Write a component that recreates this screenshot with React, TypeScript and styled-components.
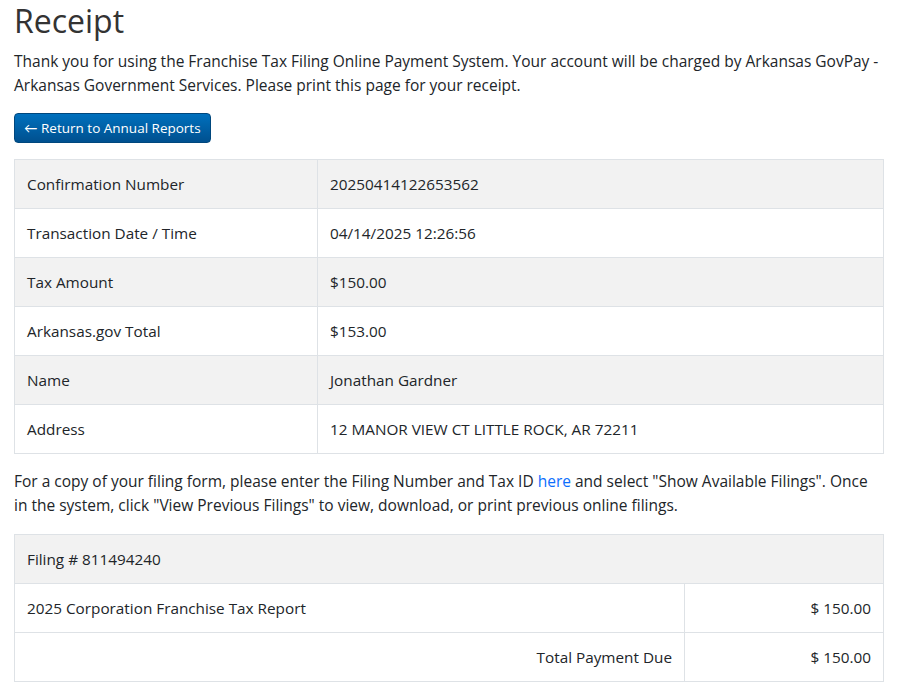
import styled, { createGlobalStyle } from "styled-components";

const GlobalStyle = createGlobalStyle`
  body {
    margin: 0;
    background: #fff;
    font-family: "Open Sans", Lato, sans-serif;
    color: #212529;
  }
`;

const Page = styled.div`
  padding: 0 22px 0 14px;
  width: 870px;
`;

const Title = styled.h1`
  margin: 0;
  padding-top: 2px;
  font-size: 32px;
  font-weight: 400;
  line-height: 38px;
  color: #333;
`;

const Text = styled.p<{ $top?: number }>`
  margin: ${(p) => p.$top ?? 9}px 0 0;
  font-size: 15.5px;
  line-height: 24px;
  color: #212529;
`;

const Link = styled.a`
  color: #0d6efd;
  text-decoration: none;
`;

const BackButton = styled.button`
  margin-top: 16px;
  height: 30px;
  padding: 0 9px;
  border: 1px solid #00477d;
  border-radius: 4px;
  background: linear-gradient(#0070bd, #00508f);
  color: #fff;
  font-family: inherit;
  font-size: 13.5px;
  cursor: pointer;
`;

const Table = styled.table<{ $top: number }>`
  width: 100%;
  table-layout: fixed;
  border-collapse: collapse;
  margin-top: ${(p) => p.$top}px;
  font-size: 15.3px;
`;

const Row = styled.tr<{ $shade?: boolean }>`
  background: ${(p) => (p.$shade ? "#f2f2f2" : "#fff")};
`;

const Cell = styled.td<{ $right?: boolean }>`
  height: 48px;
  padding: 0 12px;
  border: 1px solid #dee2e6;
  text-align: ${(p) => (p.$right ? "right" : "left")};
  color: #212529;
`;

const receipt = [
  ["Confirmation Number", "20250414122653562"],
  ["Transaction Date / Time", "04/14/2025 12:26:56"],
  ["Tax Amount", "$150.00"],
  ["Arkansas.gov Total", "$153.00"],
  ["Name", "Jonathan Gardner"],
  ["Address", "12 MANOR VIEW CT LITTLE ROCK, AR 72211"],
];

export default function App() {
  return (
    <Page>
      <GlobalStyle />
      <Title>Receipt</Title>
      <Text>
        Thank you for using the Franchise Tax Filing Online Payment System. Your account will be
        charged by Arkansas GovPay - Arkansas Government Services. Please print this page for your
        receipt.
      </Text>
      <BackButton>← Return to Annual Reports</BackButton>
      <Table $top={16}>
        <colgroup>
          <col style={{ width: 303 }} />
          <col />
        </colgroup>
        <tbody>
          {receipt.map(([label, value], i) => (
            <Row key={label} $shade={i % 2 === 0}>
              <Cell>{label}</Cell>
              <Cell>{value}</Cell>
            </Row>
          ))}
        </tbody>
      </Table>
      <Text $top={15}>
        For a copy of your filing form, please enter the Filing Number and Tax ID{" "}
        <Link href="#">here</Link> and select "Show Available Filings". Once in the system, click
        "View Previous Filings" to view, download, or print previous online filings.
      </Text>
      <Table $top={17}>
        <colgroup>
          <col />
          <col style={{ width: 199 }} />
        </colgroup>
        <tbody>
          <Row $shade>
            <Cell colSpan={2}>Filing # 811494240</Cell>
          </Row>
          <Row>
            <Cell>2025 Corporation Franchise Tax Report</Cell>
            <Cell $right>$ 150.00</Cell>
          </Row>
          <Row>
            <Cell $right>Total Payment Due</Cell>
            <Cell $right>$ 150.00</Cell>
          </Row>
        </tbody>
      </Table>
    </Page>
  );
}
